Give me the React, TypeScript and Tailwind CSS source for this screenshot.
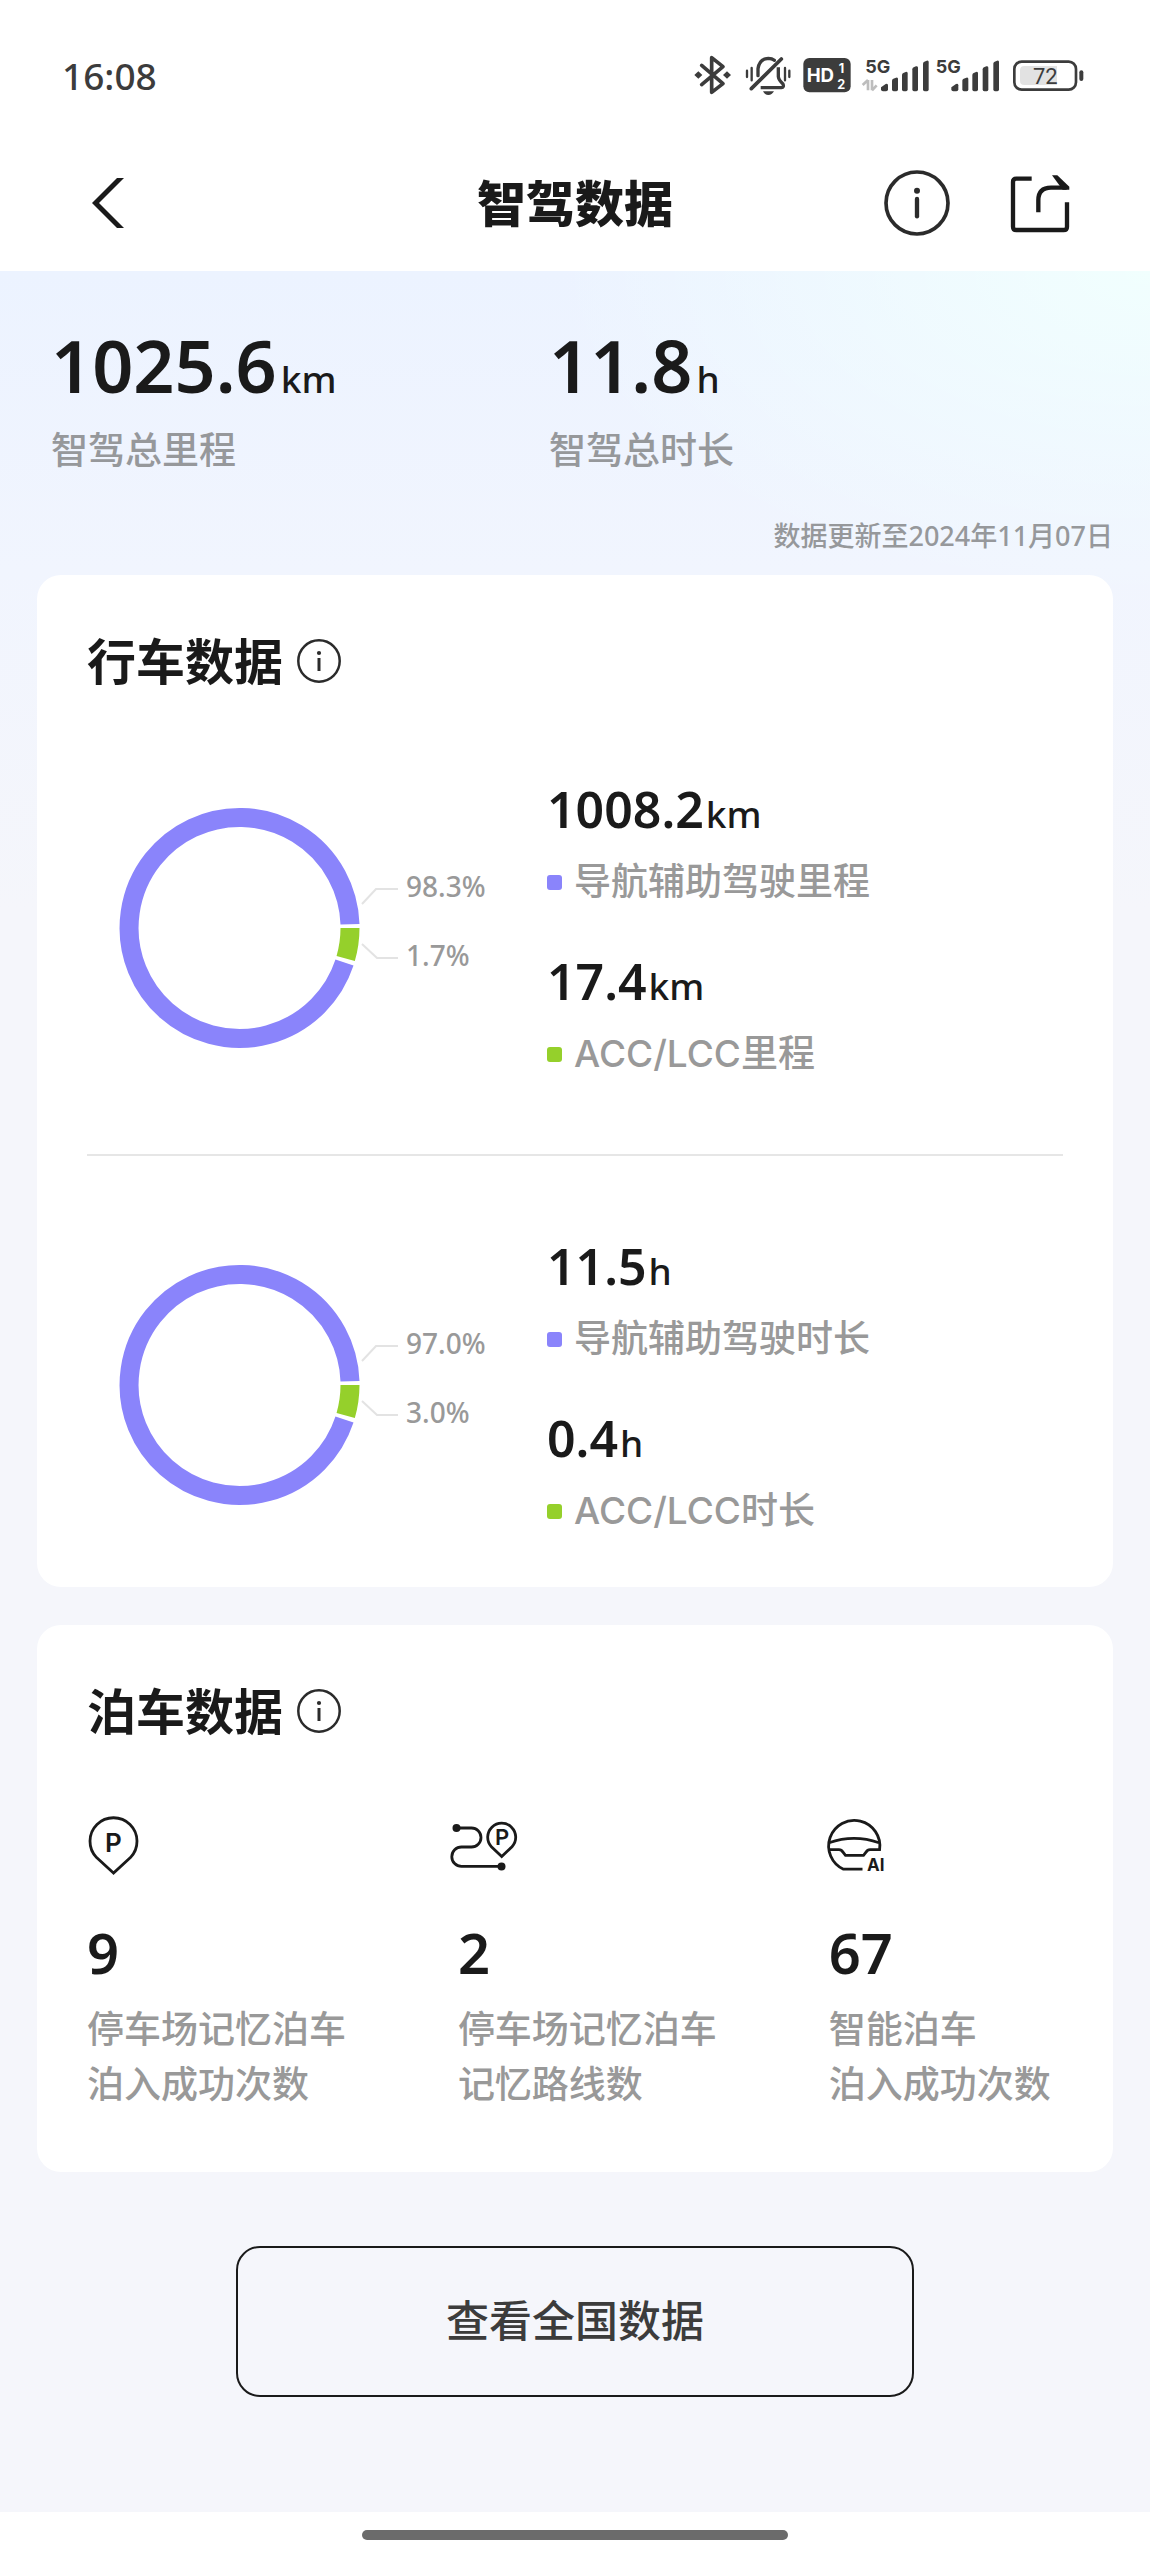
import React from "react";

interface Metric {
  value: string;
  unit: string;
  label: string;
  dot: string;
}

interface DrivingRow {
  id: string;
  main: string;
  rest: string;
  metrics: Metric[];
}

const totals = [
  { value: "1025.6", unit: "km", label: "智驾总里程" },
  { value: "11.8", unit: "h", label: "智驾总时长" },
];

const driving: DrivingRow[] = [
  {
    id: "distance",
    main: "98.3%",
    rest: "1.7%",
    metrics: [
      { value: "1008.2", unit: "km", label: "导航辅助驾驶里程", dot: "bg-[#8a84fb]" },
      { value: "17.4", unit: "km", label: "ACC/LCC里程", dot: "bg-[#95d02b]" },
    ],
  },
  {
    id: "duration",
    main: "97.0%",
    rest: "3.0%",
    metrics: [
      { value: "11.5", unit: "h", label: "导航辅助驾驶时长", dot: "bg-[#8a84fb]" },
      { value: "0.4", unit: "h", label: "ACC/LCC时长", dot: "bg-[#95d02b]" },
    ],
  },
];

function SignalBars({ x }: { x: number }) {
  return (
    <g transform={`translate(${x} 0)`} fill="#3c3c3c">
      <path d="M0 146V140L14 130Q21 127 21 134V146Q21 152 15 152H6Q0 152 0 146Z" />
      <path d="M33 146V120Q33 116 37 114L45 111Q51 109 51 115V146Q51 152 46 152H38Q33 152 33 146Z" />
      <path d="M63 146V103Q63 99 67 97L74 94Q80 92 80 98V146Q80 152 75 152H68Q63 152 63 146Z" />
      <path d="M94 146V86Q94 82 98 80L105 77Q111 75 111 81V146Q111 152 106 152H99Q94 152 94 146Z" />
      <path d="M126 146V69Q126 65 130 63L137 60Q143 58 143 64V146Q143 152 138 152H131Q126 152 126 146Z" />
    </g>
  );
}

function StatusBar() {
  return (
    <div className="flex h-[150px] items-center justify-between pl-[62px] pr-[66px] text-[#3c3c3c]">
      <span className="text-[37px] font-medium leading-none">16:08</span>
      <div className="flex items-center">
        {/* bluetooth */}
        <svg width="37" height="42" viewBox="70 40 111 126" fill="none" stroke="#3c3c3c" strokeWidth="11">
          <path d="M93 74 157 129 123 155V51L157 78 93 132" strokeLinecap="round" strokeLinejoin="round" />
          <path d="M71 103 83 92 95 103 83 114ZM157 103 169 92 181 103 169 114Z" fill="#3c3c3c" stroke="none" />
        </svg>
        {/* muted bell */}
        <svg className="ml-3.5" width="46" height="42" viewBox="223 40 138 126" fill="none" stroke="#3c3c3c" strokeWidth="10">
          <path d="M229 90V109M243 82V119M343 82V119M356 90V109" strokeWidth="7" strokeLinecap="round" />
          <path d="M262 105V84Q266 54 293 53Q304 53 311 59" strokeLinecap="round" />
          <path d="M323 80V108Q324 118 337 130Q341 140 332 141H270" strokeLinejoin="round" />
          <path d="M242 144 332 55" strokeWidth="11" strokeLinecap="round" />
          <path d="M277 152H310Q304 163 293 163T277 152Z" fill="#3c3c3c" stroke="none" />
        </svg>
        {/* HD voice on both cards */}
        <svg className="ml-3" width="48" height="42" viewBox="397 40 144 126" fill="#fff">
          <rect x="398" y="52" width="142" height="103" rx="18" fill="#3c3c3c" />
          <text x="408" y="125" className="font-[Inter] text-[56px] font-bold">HD</text>
          <text x="504" y="97" className="font-[Inter] text-[38px] font-bold">1</text>
          <text x="500" y="144" className="font-[Inter] text-[38px] font-bold">2</text>
        </svg>
        <svg className="ml-2.5" width="68" height="42" viewBox="571 40 204 126">
          <text x="584" y="97" fill="#3c3c3c" className="font-[Inter] text-[54px] font-bold">5G</text>
          <path d="M592 118V149M592 118 576 133M604 149V118M604 149 618 134" fill="none" stroke="#bdbdbd" strokeWidth="8" />
          <SignalBars x={631} />
        </svg>
        <svg className="ml-[7px]" width="64" height="42" viewBox="796 40 192 126">
          <text x="795" y="97" fill="#3c3c3c" className="font-[Inter] text-[54px] font-bold">5G</text>
          <SignalBars x={842} />
        </svg>
        {/* battery */}
        <svg className="ml-[13px]" width="71" height="42" viewBox="1028 40 213 126">
          <rect x="1032" y="63" width="185" height="84" rx="22" fill="none" stroke="#3c3c3c" strokeWidth="8" />
          <path d="M1062 76H1160V133H1062Q1049 133 1049 120V89Q1049 76 1062 76Z" fill="#e2e2e2" />
          <rect x="1227" y="89" width="12" height="32" rx="6" fill="#3c3c3c" />
          <text x="1088" y="129" fill="#3c3c3c" className="font-[Roboto] text-[66px]">72</text>
        </svg>
      </div>
    </div>
  );
}

function InfoButton({ label }: { label: string }) {
  return (
    <button type="button" aria-label={label}>
      <svg width="46" height="46" viewBox="0 0 46 46" fill="none" stroke="#2b2b2b" strokeWidth="2.5">
        <circle cx="23" cy="23" r="20.7" />
        <path d="M23 20V33" strokeWidth="3" />
        <circle cx="23" cy="15" r="2.1" fill="#2b2b2b" stroke="none" />
      </svg>
    </button>
  );
}

function CardTitle({ children }: { children: string }) {
  return (
    <div className="flex items-center gap-[13px]">
      <h2 className="text-[49px] font-semibold leading-[54px]">{children}</h2>
      <InfoButton label={`${children}说明`} />
    </div>
  );
}

function Donut({ main, rest }: { main: string; rest: string }) {
  return (
    <svg className="w-[460px] shrink-0" height="244" viewBox="0 0 460 244" fill="none">
      <path d="M263 117.2A110.5 110.5 0 1 0 257.5 155.6" stroke="#8a84fb" strokeWidth="19" />
      <path d="M263 121A110.5 110.5 0 0 1 258.7 151.5" stroke="#95d02b" strokeWidth="19" />
      <path d="M275 97 289 82H311M275 137 290 151H311" stroke="#e3e3e3" strokeWidth="2" />
      <g fill="#999" className="text-[28px] font-medium">
        <text x="319" y="90">{main}</text>
        <text x="319" y="159">{rest}</text>
      </g>
    </svg>
  );
}

function DrivingSection({ row }: { row: DrivingRow }) {
  return (
    <div className="flex items-center">
      <Donut main={row.main} rest={row.rest} />
      <dl className="flex flex-col gap-[45px]">
        {row.metrics.map((m) => (
          <div key={m.label} className="flex flex-col-reverse gap-[19px]">
            <dt className="flex items-center gap-3 font-['Inter','Noto_Sans_CJK_SC',sans-serif] text-[37px] font-medium leading-[48px] text-[#999]">
              <span className={`size-[15px] rounded-[3px] ${m.dot}`} />
              {m.label}
            </dt>
            <dd className="flex h-[60px] items-baseline gap-0.5 leading-[60px]">
              <span className="text-[50px] font-semibold">{m.value}</span>
              <span className="text-[37px] font-medium leading-none">{m.unit}</span>
            </dd>
          </div>
        ))}
      </dl>
    </div>
  );
}

const parking = [
  {
    id: "pin",
    value: "9",
    lines: ["停车场记忆泊车", "泊入成功次数"],
    icon: (
      <>
        <path d="M26.5 60 9.6 44.6A23.5 23.5 0 1 1 43.4 44.6Z" />
        <text x="18" y="38.5" fill="#1a1a1a" stroke="none" className="font-[Inter] text-[26px] font-semibold">P</text>
      </>
    ),
  },
  {
    id: "route",
    value: "2",
    lines: ["停车场记忆泊车", "记忆路线数"],
    icon: (
      <>
        <path d="M-1.5 15H13.5A9.5 9.5 0 0 1 13.5 34H3.5A9.7 9.7 0 0 0 3.5 53.4H43.5" />
        <circle cx="-1.5" cy="15" r="4" fill="#1a1a1a" stroke="none" />
        <circle cx="43.5" cy="53.4" r="4" fill="#1a1a1a" stroke="none" />
        <path d="M43.7 43.5 33.4 33.7A14 14 0 1 1 54 33.7Z" />
        <text x="37" y="32" fill="#1a1a1a" stroke="none" className="font-[Inter] text-[22px] font-semibold">P</text>
      </>
    ),
  },
  {
    id: "auto",
    value: "67",
    lines: ["智能泊车", "泊入成功次数"],
    icon: (
      <>
        <path d="M33.5 56.2H14.5A25.6 25.6 0 1 1 50.6 36.6H41Q38.5 36.6 37 39.2L34.5 42.3H16.5L14 39.2Q12.5 36.6 10 36.6H0" />
        <path d="M0 29.7Q25 21 50 29.7" />
        <text x="38" y="57.5" fill="#1a1a1a" stroke="none" className="font-[Inter] text-[17px] font-bold">AI</text>
      </>
    ),
  },
];

export default function App() {
  return (
    <div className="flex min-h-screen flex-col bg-white font-['Noto_Sans','Noto_Sans_CJK_SC',sans-serif] text-[#1a1a1a]">
      <header>
        <StatusBar />
        <nav className="grid grid-cols-[1fr_auto_1fr] items-center px-20 pb-[15px]">
          <button type="button" aria-label="返回" className="justify-self-start pl-3">
            <svg width="32" height="52" viewBox="0 0 32 52" fill="#1a1a1a">
              <path d="M25 1H32L7 26 32 51H25L0 26Z" />
            </svg>
          </button>
          <h1 className="text-[49px] font-black leading-[106px]">智驾数据</h1>
          <div className="flex items-center gap-[59px] justify-self-end">
            <button type="button" aria-label="说明">
              <svg width="68" height="68" viewBox="101 56 204 204" fill="none" stroke="#2b2b2b">
                <circle cx="203" cy="158" r="93" strokeWidth="11" />
                <path d="M203 146V198" strokeWidth="13" strokeLinecap="round" />
                <circle cx="203" cy="121" r="9" fill="#2b2b2b" stroke="none" />
              </svg>
            </button>
            <button type="button" aria-label="分享">
              <svg width="60" height="60" viewBox="482 70 180 180" fill="none" stroke="#1a1a1a" strokeWidth="13">
                <path d="M547 87H501Q491 87 491 97V231Q491 241 501 241H643Q653 241 653 231V158" />
                <path d="M567 188V152Q567 114 605 114H652" />
                <path d="M608 77H624L660 111V120H640Z" fill="#1a1a1a" stroke="none" />
              </svg>
            </button>
          </div>
        </nav>
      </header>

      <main className="flex-1 bg-[#f5f6fb] bg-[radial-gradient(ellipse_600px_330px_at_100%_0%,#f1fffe_0%,#f1fffe00_100%),linear-gradient(180deg,#ecf3ff_0px,#f1f5fe_300px,#f5f6fb_640px)] px-[37px]">
        <dl className="flex px-3.5 pt-[54px]">
          {totals.map((t) => (
            <div key={t.label} className="flex w-[498px] flex-col-reverse gap-[21px]">
              <dt className="text-[37px] font-medium leading-[48px] text-[#96989b]">{t.label}</dt>
              <dd className="flex h-20 items-baseline gap-1 leading-[80px]">
                <span className="text-[72px] font-semibold">{t.value}</span>
                <span className="text-[37px] font-medium leading-none">{t.unit}</span>
              </dd>
            </div>
          ))}
        </dl>
        <p className="mb-[21px] mt-11 text-right text-[27px] font-medium leading-9 text-[#96989b]">
          数据更新至2024年11月07日
        </p>

        <section className="rounded-3xl bg-white px-[50px] pb-[52px] pt-[59px]">
          <CardTitle>行车数据</CardTitle>
          <div className="mt-[91px]">
            <DrivingSection row={driving[0]} />
          </div>
          <hr className="mb-20 mt-[76px] border-t-2 border-[#e6e6e6]" />
          <DrivingSection row={driving[1]} />
        </section>

        <section className="mt-[38px] rounded-3xl bg-white px-[50px] pb-[61px] pt-[59px]">
          <CardTitle>泊车数据</CardTitle>
          <ul className="mt-[75px] grid grid-cols-[38%_38%_24%]">
            {parking.map((p) => (
              <li key={p.id}>
                <svg width="64" height="64" viewBox="0 0 64 64" className="overflow-visible" fill="none" stroke="#1a1a1a" strokeWidth="2.8">
                  {p.icon}
                </svg>
                <div className="mt-[43px] text-[56px] font-semibold leading-[64px]">{p.value}</div>
                <p className="mt-[17px] whitespace-nowrap text-[37px] font-medium leading-[55px] text-[#999]">
                  {p.lines[0]}
                  <br />
                  {p.lines[1]}
                </p>
              </li>
            ))}
          </ul>
        </section>

        <button
          type="button"
          className="mx-auto mb-[115px] mt-[74px] block h-[151px] w-[63%] rounded-3xl border-2 border-[#1a1a1a] text-[43px] font-medium text-[#3c3c3c]"
        >
          查看全国数据
        </button>
      </main>

      <footer className="flex h-[45px] items-center justify-center bg-white">
        <div className="h-2.5 w-[37%] rounded-full bg-[#6b6b6b]" />
      </footer>
    </div>
  );
}
